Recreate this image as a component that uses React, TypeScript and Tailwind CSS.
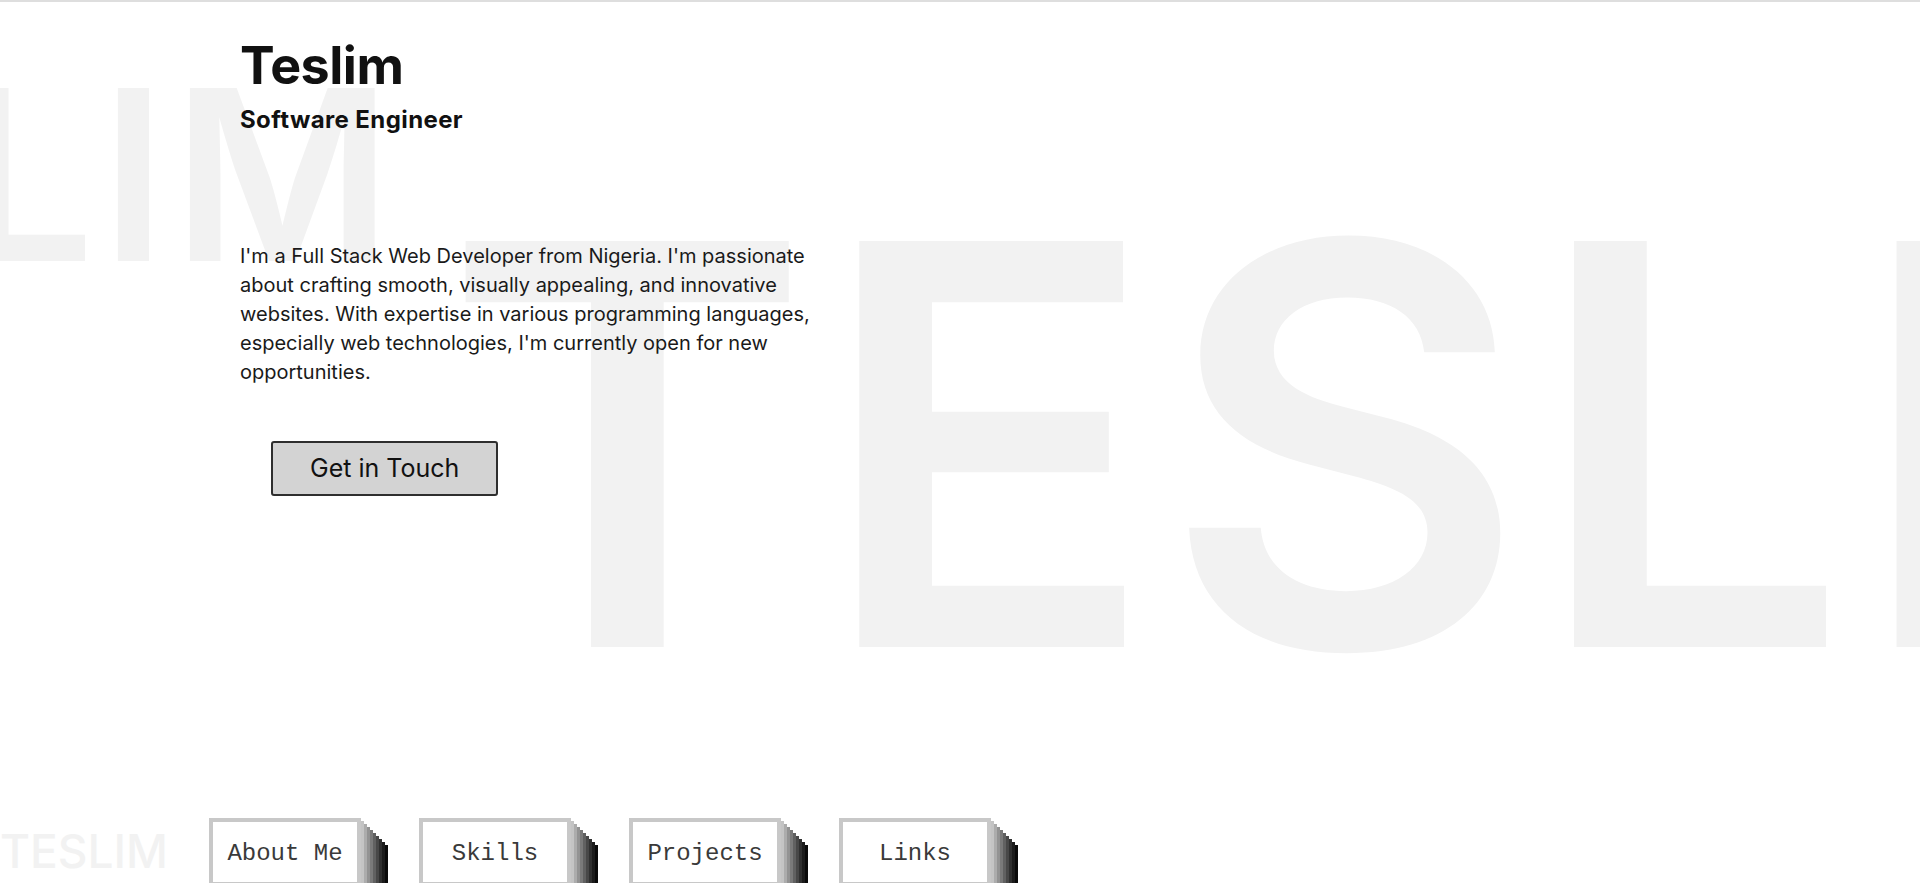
import React from "react";

const navItems = ["About Me", "Skills", "Projects", "Links"];

const stackShadow =
  "shadow-[3px_3px_0_#c4c4c4,6px_6px_0_#acacac,9px_9px_0_#939393,12px_12px_0_#7a7a7a,15px_15px_0_#616161,18px_18px_0_#484848,21px_21px_0_#303030,24px_24px_0_#1c1c1c,27px_27px_0_#0a0a0a]";

const NavBox: React.FC<{ label: string }> = ({ label }) => (
  <button
    className={`w-[152px] h-[68px] shrink-0 bg-white border-4 border-[#c8c8c8] pt-[3px] text-[24px] leading-[36px] text-[#3a3a3a] text-center font-['Liberation_Mono',monospace] ${stackShadow}`}
  >
    {label}
  </button>
);

export default function App() {
  return (
    <div className="relative h-[883px] overflow-hidden bg-white border-t-2 border-[#dedede] font-['Inter',sans-serif]">
      {/* background lettering */}
      <div className="absolute left-[-514px] top-[53px] text-[238px] leading-none font-semibold text-[#f2f2f2] whitespace-nowrap select-none tracking-[6px]">
        TESLIM
      </div>
      <div className="absolute left-[443px] top-[163px] text-[558px] leading-none font-semibold text-[#f2f2f2] whitespace-nowrap select-none tracking-[7px]">
        TESLIM
      </div>

      <div className="relative flex flex-col">
        <section className="pl-[240px] pt-[38px] text-[#111]">
          <h1 className="text-[52px] leading-none font-bold tracking-[-0.5px]">Teslim</h1>
          <h2 className="mt-[16px] text-[24px] leading-none font-bold tracking-[0.4px]">
            Software Engineer
          </h2>
          <p className="mt-[110px] text-[20px] leading-[29px] text-[#1a1a1a]">
            I'm a Full Stack Web Developer from Nigeria. I'm passionate
            <br />
            about crafting smooth, visually appealing, and innovative
            <br />
            websites. With expertise in various programming languages,
            <br />
            especially web technologies, I'm currently open for new
            <br />
            opportunities.
          </p>
          <button className="ml-[31px] mt-[54px] h-[55px] px-[37px] bg-[#d3d3d3] border-2 border-[#2e2e2e] rounded-[3px] text-[25px] text-[#111]">
            Get in Touch
          </button>
        </section>

        <nav className="mt-[322px] flex items-start">
          <div className="w-[209px] shrink-0 pt-[10px] text-[46px] leading-none font-medium text-[#f2f2f2]">
            TESLIM
          </div>
          <div className="flex gap-[58px]">
            {navItems.map((item) => (
              <NavBox key={item} label={item} />
            ))}
          </div>
        </nav>
      </div>
    </div>
  );
}
